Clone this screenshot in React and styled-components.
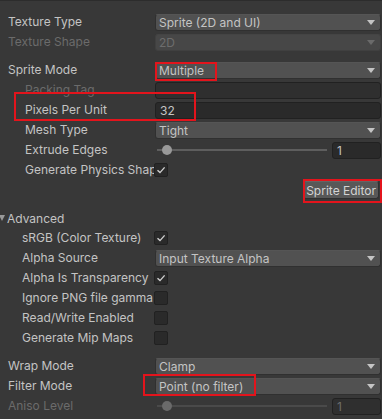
import React from "react";
import styled, { createGlobalStyle, css } from "styled-components";

const GlobalStyle = createGlobalStyle`
  html, body { margin: 0; padding: 0; background: #383838; }
  body { font-family: Inter, "Noto Sans", sans-serif; font-size: 12px; color: #c4c4c4; }
  * { box-sizing: border-box; }
`;

const Panel = styled.div`
  position: relative;
  width: 382px;
  height: 419px;
  overflow: hidden;
  background: #383838;
  border-top: 1px solid #2c2c2c;
  padding-top: 11px;
  display: flex;
  flex-direction: column;
`;

const Group = styled.div`
  display: flex;
  flex-direction: column;
  margin-top: ${(p) => p.$gap || 0}px;
`;

const Row = styled.div`
  display: grid;
  grid-template-columns: 155px 1fr;
  align-items: center;
  height: 20px;
  padding-right: 1px;
`;

const Label = styled.div`
  padding-left: ${(p) => p.$indent || 8}px;
  padding-right: 2px;
  white-space: nowrap;
  overflow: hidden;
  color: ${(p) => (p.$disabled ? "#6b6b6b" : "#c4c4c4")};
  line-height: 20px;
`;

const Dropdown = styled.div`
  height: 17px;
  border-radius: 3px;
  background: ${(p) => (p.$disabled ? "#474747" : "#515151")};
  border: 1px solid ${(p) => (p.$disabled ? "#404040" : "#303030")};
  border-top-color: ${(p) => (p.$disabled ? "#444" : "#555")};
  color: ${(p) => (p.$disabled ? "#6d6d6d" : "#c4c4c4")};
  display: flex;
  align-items: center;
  justify-content: space-between;
  padding: 0 5px 0 3px;
  line-height: 15px;
`;

const Arrow = styled.span`
  width: 0;
  height: 0;
  border-left: 4px solid transparent;
  border-right: 4px solid transparent;
  border-top: 5px solid ${(p) => (p.$disabled ? "#6a6a6a" : "#c4c4c4")};
`;

const TextField = styled.div`
  height: 17px;
  border-radius: 3px;
  background: ${(p) => (p.$disabled ? "#2f2f2f" : "#2a2a2a")};
  border: 1px solid #212121;
  display: flex;
  align-items: center;
  padding-left: 4px;
  color: ${(p) => (p.$disabled ? "#6d6d6d" : "#c4c4c4")};
`;

const SliderWrap = styled.div`
  display: flex;
  align-items: center;
  gap: 5px;
`;

const Track = styled.div`
  position: relative;
  flex: 1;
  height: 2px;
  margin-left: 2px;
  background: ${(p) => (p.$disabled ? "#4a4a4a" : "#5e5e5e")};
`;

const Knob = styled.div`
  position: absolute;
  left: 5px;
  top: -4px;
  width: 10px;
  height: 10px;
  border-radius: 50%;
  background: ${(p) => (p.$disabled ? "#6a6a6a" : "#999999")};
`;

const NumberField = styled(TextField)`
  width: 49px;
  flex: none;
`;

const CheckBox = styled.div`
  width: 14px;
  height: 14px;
  margin-left: -1px;
  border-radius: 2px;
  background: #2a2a2a;
  border: 1px solid #212121;
  display: flex;
  align-items: center;
  justify-content: center;
`;

const ButtonRow = styled.div`
  display: flex;
  justify-content: flex-end;
  align-items: center;
  height: 20px;
  padding-right: 3px;
`;

const Button = styled.div`
  height: 18px;
  padding: 0 2px;
  border-radius: 3px;
  background: #585858;
  border: 1px solid #303030;
  border-top-color: #656565;
  color: #d4d4d4;
  display: flex;
  align-items: center;
  white-space: nowrap;
`;

const Foldout = styled.div`
  display: flex;
  align-items: center;
  height: 20px;
  gap: 2px;
`;

const FoldTriangle = styled.span`
  width: 0;
  height: 0;
  border-left: 3px solid transparent;
  border-right: 3px solid transparent;
  border-top: 6px solid #999;
  margin-left: -1px;
`;

const Highlight = styled.div`
  position: absolute;
  border: 2px solid #e3141c;
  pointer-events: none;
  ${(p) => css`
    left: ${p.$x}px;
    top: ${p.$y}px;
    width: ${p.$w}px;
    height: ${p.$h}px;
  `}
`;

const Check = () => (
  <svg width="10" height="10" viewBox="0 0 10 10">
    <path d="M1.5 5.2 L4 7.6 L8.6 2.4" fill="none" stroke="#d0d0d0" strokeWidth="1.4" />
  </svg>
);

const DropRow = ({ label, value, indent, disabled }) => (
  <Row>
    <Label $indent={indent} $disabled={disabled}>{label}</Label>
    <Dropdown $disabled={disabled}>
      <span>{value}</span>
      <Arrow $disabled={disabled} />
    </Dropdown>
  </Row>
);

const CheckRow = ({ label, checked, indent }) => (
  <Row>
    <Label $indent={indent}>{label}</Label>
    <CheckBox>{checked && <Check />}</CheckBox>
  </Row>
);

const SliderRow = ({ label, value, indent, disabled }) => (
  <Row>
    <Label $indent={indent} $disabled={disabled}>{label}</Label>
    <SliderWrap>
      <Track $disabled={disabled}>
        <Knob $disabled={disabled} />
      </Track>
      <NumberField $disabled={disabled}>{value}</NumberField>
    </SliderWrap>
  </Row>
);

export default function App() {
  return (
    <>
      <GlobalStyle />
      <Panel>
        <Group>
          <DropRow label="Texture Type" value="Sprite (2D and UI)" />
          <DropRow label="Texture Shape" value="2D" disabled />
        </Group>
        <Group $gap={8}>
          <DropRow label="Sprite Mode" value="Multiple" />
          <Row>
            <Label $indent={25} $disabled>Packing Tag</Label>
            <TextField $disabled />
          </Row>
          <Row>
            <Label $indent={25}>Pixels Per Unit</Label>
            <TextField>32</TextField>
          </Row>
          <DropRow label="Mesh Type" value="Tight" indent={25} />
          <SliderRow label="Extrude Edges" value="1" indent={25} />
          <CheckRow label="Generate Physics Shape" checked indent={25} />
          <ButtonRow>
            <Button>Sprite Editor</Button>
          </ButtonRow>
        </Group>
        <Group $gap={8}>
          <Foldout>
            <FoldTriangle />
            <span>Advanced</span>
          </Foldout>
          <CheckRow label="sRGB (Color Texture)" checked indent={22} />
          <DropRow label="Alpha Source" value="Input Texture Alpha" indent={22} />
          <CheckRow label="Alpha Is Transparency" checked indent={22} />
          <CheckRow label="Ignore PNG file gamma" indent={22} />
          <CheckRow label="Read/Write Enabled" indent={22} />
          <CheckRow label="Generate Mip Maps" indent={22} />
        </Group>
        <Group $gap={8}>
          <DropRow label="Wrap Mode" value="Clamp" />
          <DropRow label="Filter Mode" value="Point (no filter)" />
          <SliderRow label="Aniso Level" value="1" disabled />
        </Group>
        <Highlight $x={155} $y={61} $w={62} $h={19} />
        <Highlight $x={14} $y={91} $w={182} $h={29} />
        <Highlight $x={303} $y={178} $w={79} $h={24} />
        <Highlight $x={143} $y={373} $w={113} $h={22} />
      </Panel>
    </>
  );
}
